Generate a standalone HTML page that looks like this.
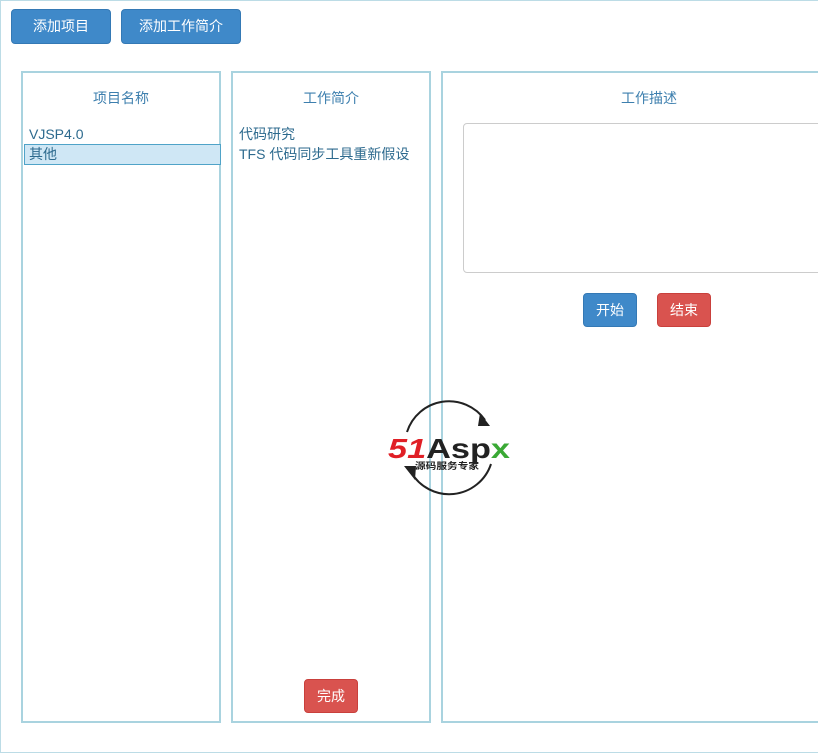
<!DOCTYPE html>
<html><head><meta charset="utf-8"><style>
*{box-sizing:border-box;margin:0;padding:0}
body{width:818px;height:753px;background:#fff;position:relative;overflow:hidden;font-family:"Liberation Sans","Noto Sans CJK SC",sans-serif;font-size:14px}
.outer{position:absolute;left:0;top:0;width:830px;height:753px;border:1px solid #bcdce6}
.btn{position:absolute;color:#fff;border-radius:4px;text-align:center;font-size:14px}
.blue{background:#3f89c9;border:1px solid #3479b5}
.red{background:#d9534f;border:1px solid #c9403c}
.panel{position:absolute;top:71px;height:652px;border:2px solid #a9d3df;background:#fff}
.h{position:absolute;top:15px;left:0;right:0;text-align:center;color:#3d7fae;font-size:14px}
.item{position:absolute;left:6px;color:#2d6a8e;font-size:14px;line-height:20px}
</style></head><body>
<div class="outer"></div>
<div class="btn blue" style="left:11px;top:9px;width:100px;height:35px;line-height:33px">添加项目</div>
<div class="btn blue" style="left:121px;top:9px;width:120px;height:35px;line-height:33px">添加工作简介</div>

<div class="panel" style="left:21px;width:200px">
 <div class="h">项目名称</div>
 <div class="item" style="top:51px">VJSP4.0</div>
 <div style="position:absolute;left:1px;top:71px;width:197px;height:21px;background:#cfe7f5;border:1px solid #4fa3c8"></div>
 <div class="item" style="top:71px">其他</div>
</div>
<div class="panel" style="left:231px;width:200px">
 <div class="h">工作简介</div>
 <div class="item" style="top:51px">代码研究</div>
 <div class="item" style="top:71px">TFS 代码同步工具重新假设</div>
 <div class="btn red" style="left:71px;top:606px;width:54px;height:34px;line-height:32px">完成</div>
</div>
<div class="panel" style="left:441px;width:400px">
 <div class="h" style="width:412px;right:auto">工作描述</div>
 <div style="position:absolute;left:20px;top:50px;width:380px;height:150px;border:1px solid #ccc;border-radius:4px"></div>
 <div class="btn blue" style="left:140px;top:220px;width:54px;height:34px;line-height:32px">开始</div>
 <div class="btn red" style="left:214px;top:220px;width:54px;height:34px;line-height:32px">结束</div>
</div>

<svg style="position:absolute;left:385px;top:400px" width="130" height="96" viewBox="0 0 130 96">
 <path d="M22 32 A44 44 0 0 1 100 20" fill="none" stroke="#222" stroke-width="2"/>
 <path d="M106 64 A44 44 0 0 1 26 72" fill="none" stroke="#222" stroke-width="2"/>
 <polygon points="95,13 105,26 93,26" fill="#222"/>
 <polygon points="30,80 19,66 31,66" fill="#222"/>
 <text x="3" y="58" textLength="122" lengthAdjust="spacingAndGlyphs" font-family="Liberation Sans" font-weight="bold" font-size="28" fill="#222"><tspan fill="#e01f26" font-style="italic">51</tspan><tspan>Asp</tspan><tspan fill="#3aa935">x</tspan></text>
 <text x="30" y="69" textLength="64" lengthAdjust="spacingAndGlyphs" font-family="Noto Sans CJK SC" font-size="9" font-weight="bold" fill="#222">源码服务专家</text>
</svg>
</body></html>
